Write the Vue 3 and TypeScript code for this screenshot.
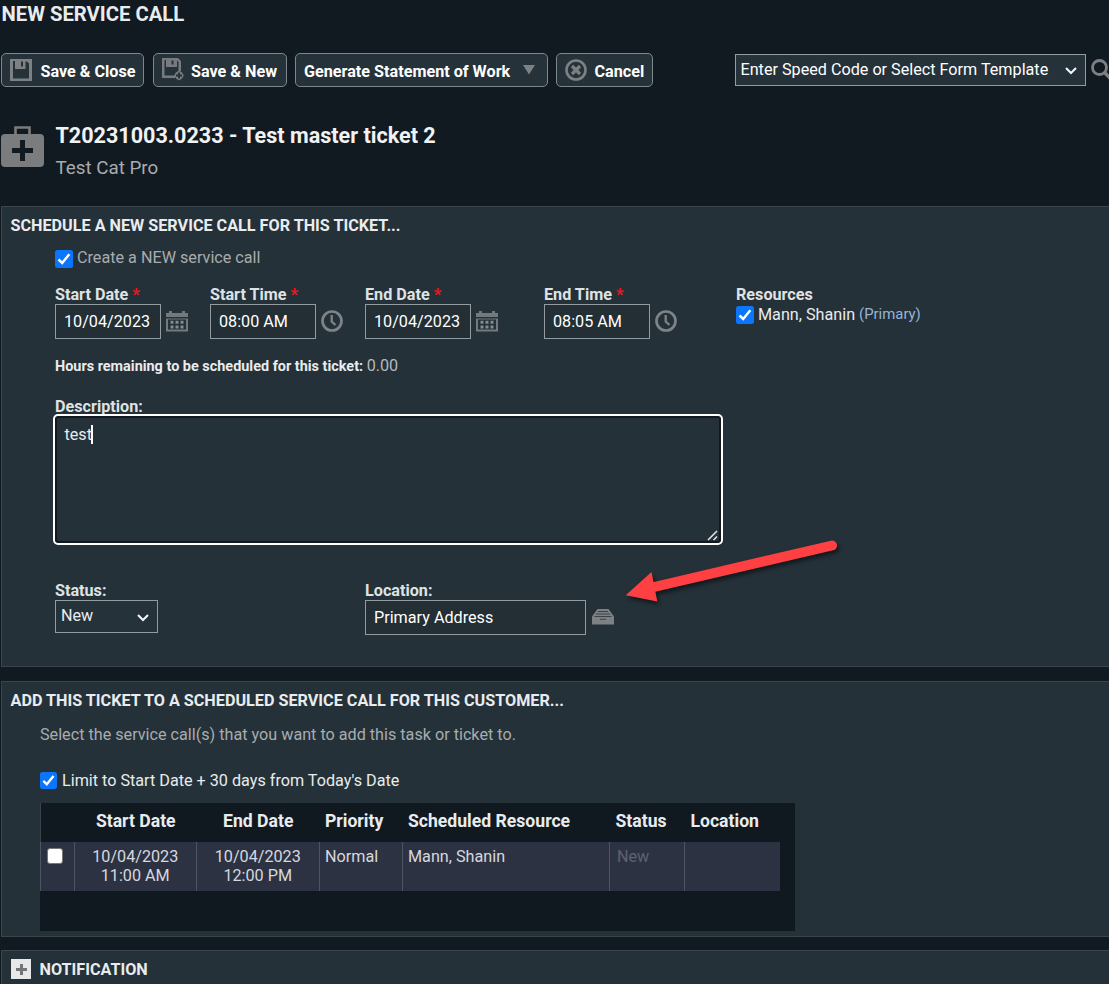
<script setup lang="ts">
import { ref } from 'vue'

interface ScheduleField {
  label: string
  value: string
  icon: 'calendar' | 'clock'
}

interface Column {
  label: string
  key: string
}

const fields: ScheduleField[] = [
  { label: 'Start Date', value: '10/04/2023', icon: 'calendar' },
  { label: 'Start Time', value: '08:00 AM', icon: 'clock' },
  { label: 'End Date', value: '10/04/2023', icon: 'calendar' },
  { label: 'End Time', value: '08:05 AM', icon: 'clock' },
]

const columns: Column[] = [
  { label: '', key: 'check' },
  { label: 'Start Date', key: 'start' },
  { label: 'End Date', key: 'end' },
  { label: 'Priority', key: 'priority' },
  { label: 'Scheduled Resource', key: 'resource' },
  { label: 'Status', key: 'status-head' },
  { label: 'Location', key: 'location' },
]

const description = ref<string>('test')
</script>

<template>
  <main class="page">
    <h1 class="page-title">NEW SERVICE CALL</h1>

    <div class="toolbar">
      <button class="btn save-close">
        <svg width="22" height="22" viewBox="0 0 22 22">
          <path fill="#7e8183" fill-rule="evenodd" d="M0 0H22V22H0ZM3 2V19.500H19V4.500L17 2.500H15.500V10H5V2ZM11 2.500V7.500H13V2.500Z" />
        </svg>
        <span>Save &amp; Close</span>
      </button>
      <button class="btn save-new">
        <svg width="22" height="23" viewBox="0 0 22 23">
          <path fill="#777b7e" fill-rule="evenodd" d="M0 0H16L19 3V13H16.500V4L15 2.500V9H4V2H2.500V17.500H13V20H0ZM9.500 2.500V6.500H11.500V2.500Z" />
          <path fill="#777b7e" d="M17 12.500L22 17.500L17 22.500L12 17.500Z" />
          <circle cx="17" cy="17.500" r="4.200" fill="#777b7e" />
          <path stroke="#25323a" stroke-width="1.800" d="M17 14.500V20.500M14 17.500H20" />
        </svg>
        <span>Save &amp; New</span>
      </button>
      <button class="btn generate">
        <span>Generate Statement of Work</span>
        <svg width="12" height="10" viewBox="0 0 12 10"><path fill="#7e8183" d="M0 0H12L6 9.500Z" /></svg>
      </button>
      <button class="btn cancel">
        <svg width="22" height="22" viewBox="0 0 22 22" fill="none" stroke="#7e8183">
          <circle cx="11" cy="11" r="9.500" stroke-width="2.600" />
          <path stroke-width="3.200" d="M7 7L15 15M15 7L7 15" />
        </svg>
        <span>Cancel</span>
      </button>
      <div class="select speed-code">
        <span>Enter Speed Code or Select Form Template</span>
        <svg width="12" height="8" viewBox="0 0 12 8"><path fill="none" stroke="#f4f6f7" stroke-width="2" d="M1 1L6 6L11 1" /></svg>
      </div>
      <svg class="search" width="24" height="24" viewBox="0 0 24 24" fill="none" stroke="#7e8183">
        <circle cx="9.500" cy="8.500" r="7" stroke-width="2.800" />
        <path stroke-width="3.600" d="M14.500 13.500L21.500 20.500" />
      </svg>
    </div>

    <header class="ticket">
      <svg width="43" height="41" viewBox="0 0 43 41">
        <path fill="none" stroke="#7a7c7d" stroke-width="2.600" d="M14.500 10V1.500H28.500V10" />
        <rect y="8" width="43" height="33" rx="4" fill="#7a7c7d" />
        <path stroke="#111a21" stroke-width="5" d="M21.500 14V35M11 24.500H32" />
      </svg>
      <div>
        <h2>T20231003.0233 - Test master ticket 2</h2>
        <p>Test Cat Pro</p>
      </div>
    </header>

    <section class="panel schedule">
      <h3>SCHEDULE A NEW SERVICE CALL FOR THIS TICKET...</h3>
      <label class="check-row create">
        <svg class="tick" viewBox="0 0 18 18"><rect width="18" height="18" rx="2.500" fill="#0b76fb" /><path fill="none" stroke="#fff" stroke-width="2.500" d="M3.500 9.500L7.200 13L14.300 4.300" /></svg>
        <span>Create a NEW service call</span>
      </label>

      <div class="fields">
        <div v-for="field in fields" :key="field.label" class="field">
          <div class="label">{{ field.label }} <b class="star">*</b></div>
          <div class="control">
            <div class="input">{{ field.value }}</div>
            <svg v-if="field.icon === 'calendar'" width="22" height="21" viewBox="0 0 22 21">
              <path fill="#73797d" fill-rule="evenodd" d="M0 2H3V0H6V2H16V0H19V2H22V6H0ZM0 7.500H22V20.500H0ZM2 8.500V18.500H20V8.500Z" />
              <path stroke="#858a8d" stroke-width="3" stroke-dasharray="3 2" d="M4.500 11.300H17.500M4.500 16H17.500" />
            </svg>
            <svg v-else class="clock" width="22" height="22" viewBox="0 0 22 22" fill="none" stroke="#7e8387">
              <circle cx="11" cy="11" r="9.500" stroke-width="2.700" />
              <path stroke-width="2.300" d="M10.700 5V11.500L14.500 15" />
            </svg>
          </div>
        </div>
        <div class="resources">
          <div class="label">Resources</div>
          <label class="check-row">
            <svg class="tick" viewBox="0 0 18 18"><rect width="18" height="18" rx="2.500" fill="#0b76fb" /><path fill="none" stroke="#fff" stroke-width="2.500" d="M3.500 9.500L7.200 13L14.300 4.300" /></svg>
            <span class="person">Mann, Shanin</span><span class="primary">(Primary)</span>
          </label>
        </div>
      </div>

      <p class="hours"><b>Hours remaining to be scheduled for this ticket:</b> <span>0.00</span></p>

      <div class="label desc-label">Description:</div>
      <div class="textarea">
        <span>{{ description }}</span><i class="caret"></i>
        <svg class="grip" width="11" height="11" viewBox="0 0 11 11"><path stroke="#e6e8e9" stroke-width="1.500" d="M1 10L10 1M6.500 10L10 6.500" /></svg>
      </div>

      <div class="bottom-fields">
        <div>
          <div class="label">Status:</div>
          <div class="select status">
            <span>New</span>
            <svg width="12" height="8" viewBox="0 0 12 8"><path fill="none" stroke="#f4f6f7" stroke-width="2" d="M1 1L6 6L11 1" /></svg>
          </div>
        </div>
        <div>
          <div class="label">Location:</div>
          <div class="control">
            <div class="input wide">Primary Address</div>
            <svg class="drawer" width="22" height="16" viewBox="0 0 22 16">
              <path fill="#7e8183" d="M5.500 0H16.500L22 7.500V15.500H0V7.500Z" />
              <path fill="none" stroke="#3a444a" stroke-width="1.100" d="M6 2.500H16M4 5H18M2.500 7.500H19.500M8 10.300H14" />
            </svg>
          </div>
        </div>
      </div>
    </section>

    <section class="panel existing">
      <h3>ADD THIS TICKET TO A SCHEDULED SERVICE CALL FOR THIS CUSTOMER...</h3>
      <p class="hint">Select the service call(s) that you want to add this task or ticket to.</p>
      <label class="check-row limit">
        <svg class="tick small" viewBox="0 0 18 18"><rect width="18" height="18" rx="2.500" fill="#0b76fb" /><path fill="none" stroke="#fff" stroke-width="2.500" d="M3.500 9.500L7.200 13L14.300 4.300" /></svg>
        <span>Limit to Start Date + 30 days from Today's Date</span>
      </label>
      <div class="table">
        <div class="row head">
          <div v-for="col in columns" :key="col.key" :class="['cell', col.key]">{{ col.label }}</div>
        </div>
        <div class="row body">
          <div class="cell check"><i class="box"></i></div>
          <div class="cell start">10/04/2023<br />11:00 AM</div>
          <div class="cell end">10/04/2023<br />12:00 PM</div>
          <div class="cell priority">Normal</div>
          <div class="cell resource">Mann, Shanin</div>
          <div class="cell status-cell">New</div>
          <div class="cell location"></div>
        </div>
      </div>
    </section>

    <section class="panel notification">
      <svg width="20" height="20" viewBox="0 0 20 20"><rect width="20" height="20" fill="#e8e8e8" /><path stroke="#71767a" stroke-width="3" d="M10.500 5V16M5 10.500H16" /></svg>
      <h3>NOTIFICATION</h3>
    </section>

    <svg class="arrow" width="230" height="80" viewBox="0 0 230 80">
      <path stroke="#fe4042" stroke-width="10" stroke-linecap="round" d="M32 47.500L212 5.500" />
      <path fill="#fe4042" d="M5.700 55.300L31.500 32L37.300 61.500Z" />
    </svg>
  </main>
</template>

<style>
html,
body {
  margin: 0;
  background: #111a21;
  overflow: hidden;
}
</style>

<style scoped>
* {
  box-sizing: border-box;
}

.page {
  position: relative;
  width: 1109px;
  height: 984px;
  overflow: hidden;
  background: #111a21;
  color: #e9ecee;
  font: 16.18px/20px Roboto, sans-serif;
  white-space: nowrap;
}

h1,
h2,
h3,
p {
  margin: 0;
}

svg {
  display: block;
  flex: none;
}

.page-title {
  height: 53px;
  padding: 2px 0 0 1.5px;
  font-size: 20.25px;
  line-height: 24px;
  font-weight: 700;
}

.toolbar {
  display: flex;
  height: 34px;
  padding-left: 1px;
}

.btn {
  display: flex;
  align-items: center;
  flex: none;
  height: 34px;
  padding: 2px 0 0 8px;
  border: 1px solid #7d878c;
  border-radius: 5px;
  background: #25323a;
  color: #fff;
  font: 700 16.18px/20px Roboto, sans-serif;
}

.btn svg {
  margin-top: -3px;
}

.btn span {
  padding-top: 1px;
}

.save-close {
  width: 143px;
  gap: 8.5px;
  margin-right: 9px;
}

.save-new {
  width: 134px;
  gap: 7px;
  margin-right: 8px;
}

.generate {
  width: 253px;
  gap: 13px;
  margin-right: 8px;
}

.cancel {
  width: 97px;
  gap: 7.5px;
}

.select {
  display: flex;
  align-items: center;
  justify-content: space-between;
  border: 1px solid #929b9f;
  background: #25323a;
}

.speed-code {
  flex: none;
  width: 351px;
  height: 32px;
  margin: 1px 4px 0 82px;
  padding: 0 8px 1px 4.5px;
  color: #fff;
}

.speed-code svg {
  margin-top: 3px;
}

.search {
  margin-top: 6px;
}

.ticket {
  display: flex;
  gap: 11.5px;
  height: 119px;
  padding: 39px 0 0 1px;
}

.ticket h2 {
  margin-top: -3px;
  font-size: 21.57px;
  line-height: 26px;
  color: #f0f2f3;
}

.ticket p {
  margin-top: 7px;
  font-size: 18.8px;
  line-height: 24px;
  color: #a8acaf;
}

.panel {
  margin-left: 1px;
  border: 1px solid #39454b;
  border-right: 0;
  background: #253138;
}

.panel h3 {
  font-size: 16.19px;
  line-height: 20px;
  font-weight: 700;
}

.schedule {
  height: 461px;
  margin-bottom: 14px;
  padding: 9px 0 0 53px;
}

.schedule h3 {
  margin-left: -44.5px;
}

.check-row {
  display: flex;
  align-items: center;
}

.create {
  height: 20px;
  margin-top: 12px;
  gap: 4px;
  color: #a8acaf;
}

.tick {
  width: 18px;
  height: 18px;
}

.create .tick {
  margin-top: 2px;
}

.tick.small {
  width: 17px;
  height: 17px;
  margin-top: -1px;
}

.fields {
  display: grid;
  grid-template-columns: 155px 155px 179px 192px 1fr;
  margin-top: 17px;
}

.label {
  height: 19px;
  line-height: 20px;
  font-weight: 700;
  color: #dfe2e4;
}

.star {
  color: #f0141e;
}

.control {
  display: flex;
  align-items: center;
  gap: 5px;
}

.clock {
  margin-top: -1px;
}

.input {
  width: 106px;
  height: 35px;
  padding-left: 8px;
  border: 1px solid #929b9f;
  background: #232e35;
  color: #fff;
  line-height: 33px;
}

.wide {
  width: 221px;
  margin-right: 1px;
}

.drawer {
  margin-top: -1px;
}

.resources .check-row {
  height: 22px;
}

.person {
  margin-left: 4px;
}

.primary {
  margin: -2px 0 0 4px;
  font-size: 14.9px;
  color: #94b4d8;
}

.hours {
  height: 20px;
  margin-top: 17px;
  font-size: 14.43px;
}

.hours span {
  font-size: 16.18px;
  color: #b4b8bb;
}

.desc-label {
  height: 17px;
  margin-top: 21px;
}

.textarea {
  position: relative;
  display: flex;
  width: 670px;
  height: 131px;
  margin-left: -2px;
  padding: 9px 0 0 9.5px;
  border: 2px solid #fff;
  border-radius: 5px;
  background: #253138;
  box-shadow: inset 0 0 0 2px #12181d;
}

.caret {
  width: 2px;
  height: 19px;
  margin-left: -1px;
  background: #fff;
}

.grip {
  position: absolute;
  right: 3px;
  bottom: 2px;
}

.bottom-fields {
  display: grid;
  grid-template-columns: 310px 1fr;
  margin-top: 36px;
}

.status {
  width: 103px;
  height: 33px;
  padding: 0 8px 2px 5px;
}

.status svg {
  margin-top: 4px;
}

.existing {
  height: 256px;
  margin-bottom: 13px;
  padding: 9px 0 0 38px;
}

.existing h3 {
  margin-left: -29.5px;
}

.hint {
  margin-top: 14px;
  color: #a8acaf;
}

.limit {
  height: 20px;
  margin-top: 26px;
  gap: 5px;
}

.table {
  width: 755px;
  height: 128px;
  margin-top: 12px;
  background: #111920;
}

.row {
  display: grid;
  grid-template-columns: 34px 122px 123px 83px 207px 75px 96px;
  width: 740px;
}

.head {
  height: 39px;
  border-left: 1px solid #39454b;
  font-size: 17.6px;
  line-height: 36px;
  font-weight: 700;
}

.body {
  height: 49px;
  background: #2d3243;
  color: #d6d8de;
  line-height: 19px;
}

.cell {
  padding-left: 5px;
}

.body .cell {
  padding-top: 5px;
  border-left: 1px solid #4d5464;
}

.cell.start,
.cell.end {
  padding-left: 0;
  padding-right: 0.5px;
  text-align: center;
}

.head .status-head,
.head .location {
  padding-left: 5.5px;
}

.body .status-cell {
  padding-left: 7px;
  color: #5d6270;
}

.box {
  display: block;
  width: 16px;
  height: 16px;
  margin: 1px 0 0 1px;
  border: 1px solid #777;
  border-radius: 3px;
  background: #fff;
}

.notification {
  display: flex;
  height: 60px;
  gap: 8.5px;
  padding: 8px 0 0 9px;
}

.notification h3 {
  padding-top: 1px;
}

.arrow {
  position: absolute;
  left: 620px;
  top: 540px;
  overflow: visible;
  filter: drop-shadow(2px 3px 2px #10181d);
}
</style>
